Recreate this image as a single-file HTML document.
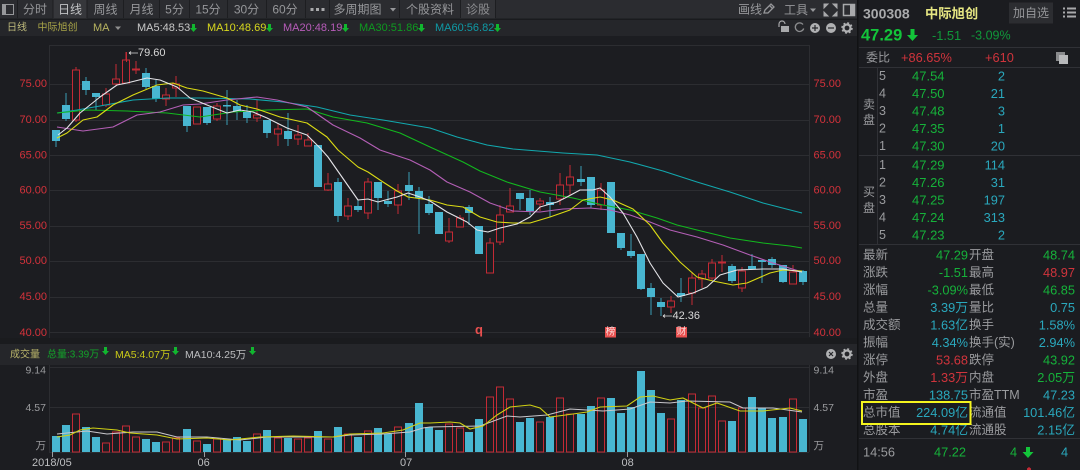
<!DOCTYPE html>
<html><head><meta charset="utf-8"><style>
html,body{margin:0;padding:0;background:#1c1d21;width:1080px;height:470px;overflow:hidden}
svg{display:block;filter:blur(.3px);font-family:"Liberation Sans","Noto Sans CJK SC",sans-serif}
text{dominant-baseline:central}
.tab{font-size:12px;fill:#96979a;text-anchor:middle}
.ax{font-size:11px;fill:#d4323b}
.g{fill:#16b23a}.c{fill:#2aa8bd}.r{fill:#d0343c}.l{fill:#9a9b9e}
.p{font-size:13px}.l.p{font-size:12.5px}.m{font-size:12.8px;text-anchor:end}
</style></head><body>
<svg width="1080" height="470" viewBox="0 0 1080 470" xmlns="http://www.w3.org/2000/svg">
<rect width="1080" height="470" fill="#1c1d21"/>
<rect width="857" height="18.5" fill="#2b2c30"/>
<rect y="18.5" width="857" height="1.5" fill="#1a1b1e"/>
<rect y="20" width="857" height="16" fill="#25262a"/>
<rect x="53" width="34" height="18.5" fill="#36373b"/>
<rect x="460" width="35" height="18.5" fill="#333438"/>
<path d="M17.5 0V18M53 0V18M87 0V18M123.5 0V18M159.5 0V18M189.5 0V18M227.5 0V18M266.5 0V18M305.5 0V18M329.5 0V18M399.5 0V18M460.5 0V18M495.5 0V18" stroke="#1d1e21" fill="none"/>
<rect y="344" width="857" height="21" fill="#25262a"/>
<rect x="857" width="1.5" height="470" fill="#111214"/>

<!-- top tabs -->
<rect x="2.5" y="4.5" width="11" height="10" fill="none" stroke="#96979a"/><rect x="3" y="5" width="3" height="9" fill="#96979a"/>
<text class="tab" x="35" y="9.5">分时</text>
<text class="tab" x="70" y="9.5" style="fill:#c2c3c5">日线</text>
<text class="tab" x="105.500" y="9.5">周线</text>
<text class="tab" x="141.500" y="9.5">月线</text>
<text class="tab" x="174.500" y="9.5">5分</text>
<text class="tab" x="208" y="9.5">15分</text>
<text class="tab" x="246.500" y="9.5">30分</text>
<text class="tab" x="285" y="9.5">60分</text>
<path d="M310.500 8h3v3h-3zM316 8h3v3h-3zM321.500 8h3v3h-3z" fill="#a8a9ab"/>
<text class="tab" x="357.500" y="9.5">多周期图</text>
<path d="M390 8h6l-3 3.500z" fill="#96979a"/>
<text class="tab" x="430" y="9.5">个股资料</text>
<text class="tab" x="478" y="9.5" style="fill:#8d8e91">诊股</text>
<text class="tab" x="750" y="9.5">画线</text>
<path d="M764 13l1-3 6-6 3 3-6 6zM769.500 5.500l3 3" fill="none" stroke="#96979a" stroke-width="1.300"/>
<text class="tab" x="796" y="10">工具</text>
<path d="M810 8.500h6l-3 3.500z" fill="#96979a"/>
<path d="M824 4h4l-4 4zM837 4h-4l4 4zM824 16h4l-4-4zM837 16h-4l4-4z" fill="#a8a9ab" stroke="#a8a9ab"/>
<rect x="843.500" y="4.500" width="11" height="11" fill="none" stroke="#a8a9ab" stroke-width="1.500"/><rect x="850" y="5" width="4" height="10" fill="#a8a9ab"/>

<!-- row 2 -->
<g font-size="10.500">
<text x="7" y="28" font-size="10" fill="#bfbb7c">日线</text>
<text x="37.500" y="28" font-size="10" fill="#a9a548">中际旭创</text>
<text x="93" y="28" font-size="11" fill="#b8b460">MA</text>
<path d="M115 26.500h6l-3 3.500z" fill="#8f8f8f"/>
<text x="137" y="28" font-size="11" fill="#c8c8c8">MA5:48.53</text>
<text x="207" y="28" font-size="11" fill="#d8d81e">MA10:48.69</text>
<text x="283" y="28" font-size="11" fill="#b75cb9">MA20:48.19</text>
<text x="359" y="28" font-size="11" fill="#0e9a20">MA30:51.86</text>
<text x="435" y="28" font-size="11" fill="#0f9aa6">MA60:56.82</text>
</g>
<path d="M192 24h3v4h2l-3.500 4-3.500-4h2zM268 24h3v4h2l-3.500 4-3.500-4h2zM344 24h3v4h2l-3.500 4-3.500-4h2zM420 24h3v4h2l-3.500 4-3.500-4h2zM496 24h3v4h2l-3.500 4-3.500-4h2zM104 347h3v4h2l-3.500 4-3.500-4h2zM174 347h3v4h2l-3.500 4-3.500-4h2zM251 347h3v4h2l-3.500 4-3.500-4h2z" fill="#11b62f"/>
<!-- row 2 icons -->
<path d="M779 27v-3a3 3 0 0 1 6 0" fill="none" stroke="#a8a9ab" stroke-width="1.200"/><rect x="781" y="26" width="8" height="6" fill="#a8a9ab"/>
<path d="M803 24.500a4.300 4.300 0 1 0 .7 4" fill="none" stroke="#8b8c8e" stroke-width="1.300"/>
<circle cx="815" cy="28" r="5" fill="#b0b1b3"/><path d="M812 28h6M815 25v6" stroke="#25262a" stroke-width="1.200"/>
<circle cx="831" cy="28" r="5" fill="#b0b1b3"/><path d="M828 28h6" stroke="#25262a" stroke-width="1.200"/>
<circle cx="847" cy="28" r="3.500" fill="none" stroke="#b0b1b3" stroke-width="2.200"/><circle cx="847" cy="28" r="5" fill="none" stroke="#b0b1b3" stroke-width="1.500" stroke-dasharray="2 1.930"/>
<circle cx="831" cy="354" r="5" fill="#b0b1b3"/><path d="M829 352l4 4M833 352l-4 4" stroke="#25262a" stroke-width="1.200"/>
<circle cx="847" cy="354" r="3.500" fill="none" stroke="#b0b1b3" stroke-width="2.200"/><circle cx="847" cy="354" r="5" fill="none" stroke="#b0b1b3" stroke-width="1.500" stroke-dasharray="2 1.930"/>

<!-- grids -->
<path d="M49 45.500H809.500V337M49 84.500H809M49 120.500H809M49 155.500H809M49 190.500H809M49 226.500H809M49 261.500H809M49 297.500H809M49 332.500H809M49 367.500H809M49 407.500H809M49.500 45V340M49.500 365V452M809.500 365V452M49 452.500H809" stroke="#2c2d31" fill="none"/>
<rect y="338" width="857" height="6" fill="#1a1b1e"/>

<!-- axes -->
<g class="ax">
<text x="19.500" y="84">75.00</text><text x="19.500" y="120">70.00</text><text x="19.500" y="155.500">65.00</text><text x="19.500" y="190.500">60.00</text><text x="19.500" y="226">55.00</text><text x="19.500" y="261">50.00</text><text x="19.500" y="297">45.00</text><text x="19.500" y="333">40.00</text>
<text x="813.500" y="84">75.00</text><text x="813.500" y="120">70.00</text><text x="813.500" y="155.500">65.00</text><text x="813.500" y="190.500">60.00</text><text x="813.500" y="226">55.00</text><text x="813.500" y="261">50.00</text><text x="813.500" y="297">45.00</text><text x="813.500" y="333">40.00</text>
</g>
<g font-size="10.500" fill="#9a9b9e">
<text x="25.500" y="370.500">9.14</text><text x="25.500" y="408">4.57</text><text x="35.500" y="446">万</text>
<text x="813.500" y="370.500">9.14</text><text x="813.500" y="408">4.57</text><text x="813.500" y="446">万</text>
</g>
<g font-size="11" fill="#bdbec0">
<text x="32" y="463">2018/05</text><text x="197.500" y="463">06</text><text x="400" y="463">07</text><text x="621.500" y="463">08</text>
</g>
<path d="M52.500 452V457M204.500 452V457M405.500 452V457M627.500 452V457" stroke="#9a9b9e"/>
<text x="10" y="355" font-size="10" fill="#b9b46a">成交量</text>
<text x="47" y="355" font-size="10" fill="#13a32a">总量:3.39万</text>
<text x="115" y="355" font-size="10.500" fill="#c9c918">MA5:4.07万</text>
<text x="185" y="355" font-size="10.500" fill="#bdbec0">MA10:4.25万</text>

<!-- volume bars -->
<path fill="#48b6d0" d="M52 436h8V452h-8zM62 425h8V452h-8zM82 427h8V452h-8zM92 437h8V452h-8zM142 439h8V452h-8zM152 442h8V452h-8zM183 429h8V452h-8zM203 444h8V452h-8zM223 439h8V452h-8zM233 437h8V452h-8zM243 441h8V452h-8zM263 430h8V452h-8zM284 438h8V452h-8zM314 431h8V452h-8zM334 427h8V452h-8zM354 437h8V452h-8zM374 428h8V452h-8zM384 434h8V452h-8zM405 423h8V452h-8zM415 403h8V452h-8zM425 427h8V452h-8zM435 430h8V452h-8zM465 432h8V452h-8zM475 419h8V452h-8zM516 422h8V452h-8zM526 418h8V452h-8zM546 417h8V452h-8zM577 414h8V452h-8zM587 406h8V452h-8zM607 398h8V452h-8zM617 413h8V452h-8zM627 407h8V452h-8zM637 371h8V452h-8zM647 390h8V452h-8zM657 413h8V452h-8zM677 400h8V452h-8zM728 421h8V452h-8zM748 397h8V452h-8zM758 408h8V452h-8zM768 418h8V452h-8zM779 417h8V452h-8zM799 419h8V452h-8z"/>
<path fill="none" stroke="#c32a35" d="M72.500 414h7V452h-7zM102.500 443h7V452h-7zM112.500 432h7V452h-7zM122.500 426h7V452h-7zM132.500 437h7V452h-7zM162.500 442h7V452h-7zM172.500 438h7V452h-7zM193.500 441h7V452h-7zM213.500 439h7V452h-7zM253.500 434h7V452h-7zM274.500 438h7V452h-7zM294.500 439h7V452h-7zM304.500 438h7V452h-7zM324.500 439h7V452h-7zM344.500 434h7V452h-7zM364.500 431h7V452h-7zM394.500 427h7V452h-7zM445.500 424h7V452h-7zM456.500 428h7V452h-7zM486.500 397h7V452h-7zM496.500 387h7V452h-7zM506.500 399h7V452h-7zM536.500 422h7V452h-7zM556.500 398h7V452h-7zM566.500 414h7V452h-7zM597.500 398h7V452h-7zM667.500 419h7V452h-7zM688.500 394h7V452h-7zM698.500 408h7V452h-7zM708.500 396h7V452h-7zM718.500 421h7V452h-7zM738.500 408h7V452h-7zM789.500 399h7V452h-7z"/>
<path fill="none" stroke="#c9c8cc" stroke-width="1.100" d="M57 434L87 431L107 434L133 432L157 432L177 437L207 437L240 440L267 437L333 437L350 435L383 434L410 432L423 428L430 427L480 426L507 416L520 417L547 415L570 409L603 411L630 409L650 402L670 403L687 401L730 402L743 408L773 408L802 412"/>
<path fill="none" stroke="#d0d014" stroke-width="1.100" d="M57 437L70 435L80 430L93 428L117 430L130 433L157 435L177 439L207 438L230 440L260 437L293 436L333 437L350 434L383 433L403 430L420 423L430 423L450 422L460 423L470 429L483 426L497 415L510 407L530 405L540 408L550 417L573 414L587 412L600 407L627 406L640 397L653 396L670 400L683 398L703 408L717 403L740 411L763 411L790 408L802 411"/>

<!-- candles cyan wicks -->
<path fill="none" stroke="#3a9db5" d="M56 130V147M66 93V121M86 77V95M96 93V110M146 68V89M156 80V102M187 106V132M207 107V125M227 90V125M237 100V120M247 105V123M267 120V138M288 113V146M338 178V222M358 200V212M378 182V210M388 191V207M409 172V200M419 187V234M429 196V215M469 205V225M520 193V210M530 190V215M550 197V217M581 166V186M591 177V208M621 233V250M631 234V258M641 254V290M651 283V315M661 298V316M681 278V302M732 264V283M752 254V270M762 260V283M772 257V268M783 265V283M803 270V285"/>
<path fill="#48b6d0" d="M52 130h8v11h-8zM62 105h8v14h-8zM82 81h8v9h-8zM92 93h8v4h-8zM142 73h8v14h-8zM152 86h8v13h-8zM183 106h8v20h-8zM203 107h8v16h-8zM223 105h8v1.500h-8zM233 106h8v5h-8zM243 112h8v6h-8zM263 120h8v13h-8zM284 131h8v8h-8zM314 145h8v42h-8zM334 182h8v34h-8zM354 206h8v4h-8zM374 182h8v16h-8zM384 201h8v3h-8zM405 185h8v6h-8zM415 191h8v7h-8zM425 204h8v9h-8zM435 212h8v22h-8zM465 207h8v6h-8zM475 226h8v28h-8zM516 193h8v6h-8zM526 198h8v13h-8zM546 202h8v3h-8zM577 179h8v3h-8zM587 177h8v28h-8zM607 182h8v51h-8zM617 233h8v15h-8zM627 251h8v5h-8zM637 254h8v35h-8zM647 288h8v9h-8zM657 302h8v5h-8zM677 293h8v3h-8zM728 266h8v15h-8zM748 266h8v3h-8zM758 260h8v2h-8zM768 259h8v6h-8zM779 265h8v17h-8zM799 271h8v11h-8z"/>
<!-- candles red -->
<path fill="none" stroke="#c32a35" d="M76 67V122M106 88V107M116 64V85M126 52V83M136 61V74M166 88V106M176 76V97M217 103V121M257 100V122M278 124V146M298 125V145M308 133V146M328 173V191M348 198V220M368 178V219M398 184V214M449 218V243M460 215V227M490 238V273M500 205V245M510 188V212M540 198V211M560 173V205M570 165V195M601 183V210M671 296V313M692 272V305M702 270V288M712 259V280M722 255V272M742 267V292M793 265V284"/>
<path fill="#1c1d21" stroke="#c32a35" d="M72.500 70h7v50h-7zM102.500 94h7v11h-7zM112.500 79h7v5h-7zM122.500 60h7v23h-7zM132.500 69h7v1h-7zM162.500 95h7v4h-7zM172.500 84h7v4h-7zM193.500 107h7v17h-7zM213.500 106h7v13h-7zM253.500 115h7v3h-7zM274.500 129h7v5h-7zM294.500 135h7v4h-7zM304.500 140h7v6h-7zM324.500 184h7v6h-7zM344.500 206h7v10h-7zM364.500 182h7v31h-7zM394.500 191h7v14h-7zM445.500 232h7v9h-7zM456.500 218h7v9h-7zM486.500 243h7v30h-7zM496.500 215h7v27h-7zM506.500 206h7v6h-7zM536.500 201h7v3h-7zM556.500 185h7v14h-7zM566.500 177h7v8h-7zM597.500 190h7v15h-7zM667.500 301h7v6h-7zM688.500 278h7v15h-7zM698.500 274h7v5h-7zM708.500 263h7v15h-7zM718.500 262h7v1h-7zM738.500 271h7v17h-7zM789.500 272h7v12h-7z"/>

<!-- MA lines -->
<g fill="none" stroke-width="1.100" stroke-linejoin="round">
<path stroke="#12a8ae" d="M57 113L77 110L100 106L133 100L167 98L200 98L250 99L283 102L317 107L350 115L383 120L430 128L457 137L487 145L513 149L563 153L597 155L630 162L663 171L697 182L730 192L763 203L802 213"/>
<path stroke="#12b81e" d="M57 113L87 110L127 111L167 113L200 117L233 112L267 110L307 109L333 117L367 123L400 133L430 147L463 162L480 171L507 182L540 192L573 198L603 205L630 210L657 218L677 225L697 230L730 238L763 243L790 246L802 248"/>
<path stroke="#b45fb6" d="M57 127L83 131L113 127L137 115L160 112L183 105L200 104L227 100L257 97L277 100L307 107L333 125L360 138L380 150L410 160L430 170L447 182L470 192L490 203L513 211L540 212L563 209L590 208L610 210L630 215L650 222L670 230L697 237L723 245L750 255L773 263L802 272"/>
<path stroke="#dcdc14" d="M57 138L67 133L83 120L97 117L113 105L133 95L157 85L173 83L187 88L203 91L227 98L240 105L257 109L280 117L307 123L327 137L338 150L358 167L368 172L383 182L397 191L408 197L430 200L447 205L463 207L480 217L497 222L513 223L530 223L550 217L570 210L583 200L600 197L613 200L633 209L650 225L663 243L680 262L697 277L713 281L733 285L747 283L770 273L783 270L802 271"/>
<path stroke="#e4e4e8" d="M58 135L67 128L80 113L100 97L117 85L127 83L147 78L160 80L177 87L190 98L207 105L227 113L240 110L253 112L267 118L287 128L307 135L320 148L328 157L358 200L368 199L378 202L397 197L408 193L420 197L430 201L447 212L467 222L477 230L488 232L500 228L517 224L530 217L540 207L557 202L567 197L580 190L593 190L600 188L610 197L623 213L637 237L650 263L663 283L678 297L693 293L707 287L720 275L737 270L763 269L783 269L802 272"/>
</g>

<!-- annotations -->
<path d="M126.500 52V62" stroke="#c32a35"/>
<path d="M129 53H138M129 53l2-1.500M129 53l2 1.500M663 316H672M663 316l2-1.500M663 316l2 1.500" stroke="#d8d8d8" fill="none" stroke-width=".8"/>
<text x="138" y="53" font-size="11" fill="#d8d8d8">79.60</text>
<text x="672.500" y="316" font-size="11" fill="#d8d8d8">42.36</text>
<text x="479" y="329.500" font-size="13" font-weight="bold" fill="#e8504f" text-anchor="middle">q</text>
<rect x="605" y="327" width="11" height="10.500" fill="#e8504f"/><text x="610.500" y="332" font-size="9.500" fill="#fbdcdc" text-anchor="middle">榜</text>
<rect x="676" y="327" width="11" height="10.500" fill="#e8504f"/><text x="681.500" y="332" font-size="9.500" fill="#fbdcdc" text-anchor="middle">财</text>

<!-- right panel -->
<rect x="858.500" width="221.500" height="470" fill="#1b1c20"/>
<text x="863" y="13.500" font-size="14" font-weight="bold" fill="#a9aaac">300308</text>
<text x="925" y="13.500" font-size="13.300" font-weight="bold" fill="#e6e682">中际旭创</text>
<rect x="1009" y="2.500" width="44" height="21" fill="#2c2d31"/>
<text x="1031" y="13" font-size="12" fill="#96979a" text-anchor="middle">加自选</text>
<path d="M1063 7.500h2v2h-2zM1067 7.500h9v2h-9zM1063 11.500h2v2h-2zM1067 11.500h9v2h-9zM1063 15.500h2v2h-2zM1067 15.500h9v2h-9z" fill="#a8a9ab"/>
<text x="861" y="35.500" font-size="16.500" font-weight="bold" fill="#13c43a">47.29</text>
<path d="M910.500 29h4v6h3.500l-5.500 6-5.500-6h3.500z" fill="#13c43a"/>
<text x="932" y="35.500" font-size="12.800" fill="#10983a">-1.51</text>
<text x="971" y="35.500" font-size="12.500" fill="#10983a">-3.09%</text>
<path d="M859 47.500H1080M859 67.500H1080M859 155.500H1080M859 244.500H1080M859 438.500H1080M877.500 68V244" stroke="#303136" fill="none"/>
<text x="866" y="57.500" font-size="12" fill="#9a9b9e">委比</text>
<text x="901" y="57.500" font-size="12.800" class="r">+86.65%</text>
<text x="985" y="57.500" font-size="12.800" class="r">+610</text>
<rect x="1056" y="52" width="9" height="9" fill="#8a8b8d"/><rect x="1059" y="55" width="9" height="9" fill="#b8b9bb"/>

<g font-size="12" class="l">
<text x="869" y="104.500" text-anchor="middle">卖</text><text x="869" y="120" text-anchor="middle">盘</text>
<text x="869" y="192" text-anchor="middle">买</text><text x="869" y="208" text-anchor="middle">盘</text>
</g>
<g class="l p">
<text x="879" y="76">5</text><text x="879" y="93.500">4</text><text x="879" y="111">3</text><text x="879" y="128.500">2</text><text x="879" y="146">1</text>
<text x="879" y="165">1</text><text x="879" y="182.500">2</text><text x="879" y="200">3</text><text x="879" y="217.500">4</text><text x="879" y="235">5</text>
</g>
<g class="g p">
<text x="912" y="76">47.54</text><text x="912" y="93.500">47.50</text><text x="912" y="111">47.48</text><text x="912" y="128.500">47.35</text><text x="912" y="146">47.30</text>
<text x="912" y="165">47.29</text><text x="912" y="182.500">47.26</text><text x="912" y="200">47.25</text><text x="912" y="217.500">47.24</text><text x="912" y="235">47.23</text>
</g>
<g class="c m">
<text x="1005" y="76">2</text><text x="1005" y="93.500">21</text><text x="1005" y="111">3</text><text x="1005" y="128.500">1</text><text x="1005" y="146">20</text>
<text x="1005" y="165">114</text><text x="1005" y="182.500">31</text><text x="1005" y="200">197</text><text x="1005" y="217.500">313</text><text x="1005" y="235">2</text>
</g>

<g class="l p">
<text x="863" y="255">最新</text><text x="969" y="255">开盘</text>
<text x="863" y="272.500">涨跌</text><text x="969" y="272.500">最高</text>
<text x="863" y="290">涨幅</text><text x="969" y="290">最低</text>
<text x="863" y="307.500">总量</text><text x="969" y="307.500">量比</text>
<text x="863" y="325">成交额</text><text x="969" y="325">换手</text>
<text x="863" y="342.500">振幅</text><text x="969" y="342.500">换手(实)</text>
<text x="863" y="360">涨停</text><text x="969" y="360">跌停</text>
<text x="863" y="377.500">外盘</text><text x="969" y="377.500">内盘</text>
<text x="863" y="395">市盈</text><text x="969" y="395">市盈TTM</text>
<text x="863" y="412.500">总市值</text><text x="969" y="412.500">流通值</text>
<text x="863" y="430">总股本</text><text x="969" y="430">流通股</text>
</g>
<g class="m">
<text x="968" y="255" class="g">47.29</text><text x="1075" y="255" class="g">48.74</text>
<text x="968" y="272.500" class="g">-1.51</text><text x="1075" y="272.500" class="r">48.97</text>
<text x="968" y="290" class="g">-3.09%</text><text x="1075" y="290" class="g">46.85</text>
<text x="968" y="307.500" class="c">3.39万</text><text x="1075" y="307.500" class="c">0.75</text>
<text x="968" y="325" class="c">1.63亿</text><text x="1075" y="325" class="c">1.58%</text>
<text x="968" y="342.500" class="c">4.34%</text><text x="1075" y="342.500" class="c">2.94%</text>
<text x="968" y="360" class="r">53.68</text><text x="1075" y="360" class="g">43.92</text>
<text x="968" y="377.500" class="r">1.33万</text><text x="1075" y="377.500" class="g">2.05万</text>
<text x="968" y="395" class="c">138.75</text><text x="1075" y="395" class="c">47.23</text>
<text x="968" y="412.500" class="c">224.09亿</text><text x="1075" y="412.500" class="c">101.46亿</text>
<text x="968" y="430" class="c">4.74亿</text><text x="1075" y="430" class="c">2.15亿</text>
</g>
<rect x="862" y="402" width="108.500" height="22" fill="none" stroke="#f4f41e" stroke-width="2"/>
<text x="863" y="452" font-size="12.800" class="l">14:56</text>
<text x="934" y="452" font-size="12.800" class="g">47.22</text>
<text x="1010" y="452" font-size="12.800" class="g">4</text>
<path d="M1026 447h4v5h3.500l-5.500 6-5.500-6h3.500z" fill="#13c43a"/>
<text x="1061" y="452" font-size="12.800" class="c">4</text>
<path d="M1027 468.500l2-1.500 2 1.500v1.500h-4z" fill="#c32a35"/>
</svg>
</body></html>
